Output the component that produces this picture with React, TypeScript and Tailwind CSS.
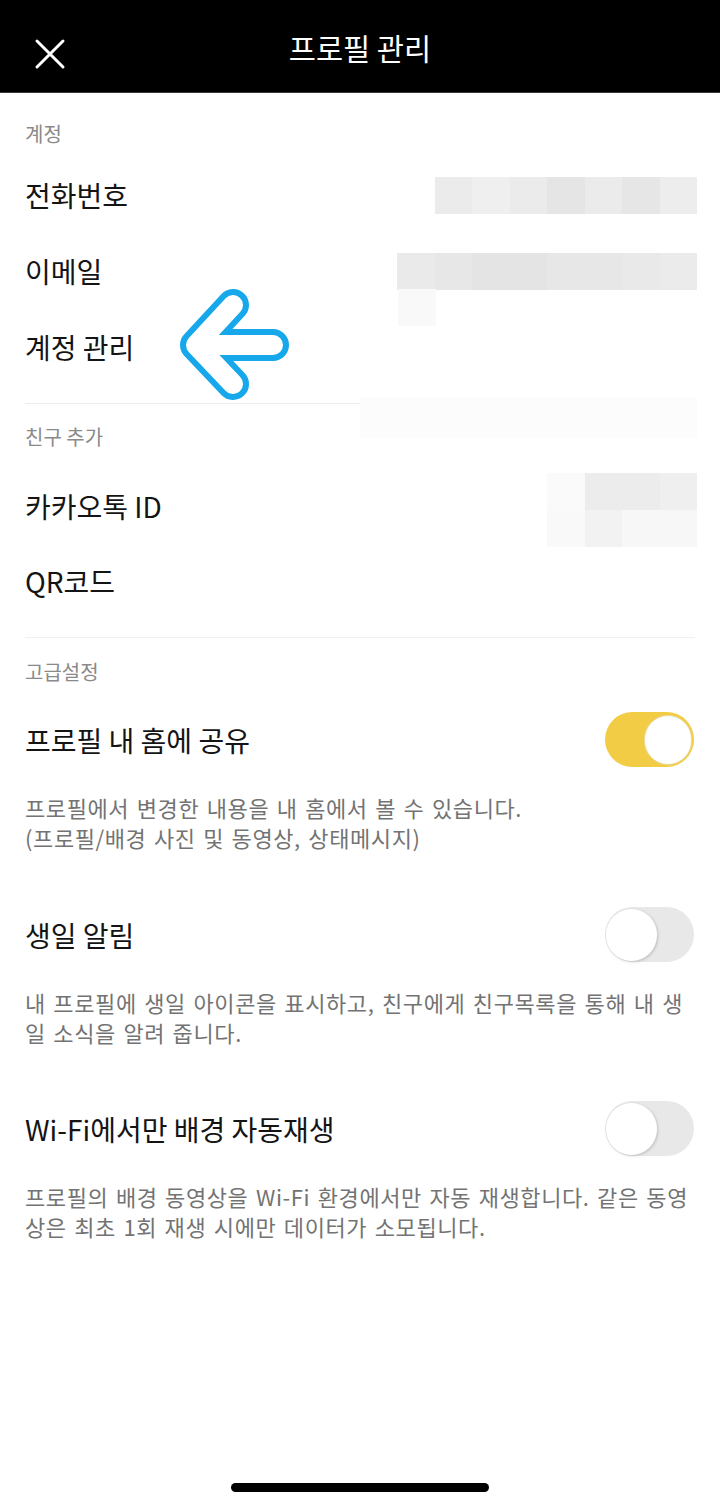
import React from "react";

const FONT = { fontFamily: '"Noto Sans CJK KR", "Noto Sans", sans-serif' };

function Mosaic({ rows, className = "" }: { rows: string[][]; className?: string }) {
  return (
    <div className={`flex flex-col ${className}`}>
      {rows.map((row, i) => (
        <div key={i} className="flex">
          {row.map((c, j) => (
            <div key={j} className="h-[37px] w-[37.5px]" style={{ backgroundColor: c }} />
          ))}
        </div>
      ))}
    </div>
  );
}

function Toggle({ on }: { on: boolean }) {
  return on ? (
    <div className="flex h-[55px] w-[89px] items-center justify-end rounded-full bg-[#f2cc44] pr-[2px]">
      <div className="h-[50px] w-[48px] rounded-full border border-[#e6d9a0] bg-white" />
    </div>
  ) : (
    <div className="flex h-[55px] w-[89px] items-center justify-start rounded-full bg-[#e8e8e8] pl-[1px]">
      <div className="h-[52px] w-[51px] rounded-full bg-white shadow-[1px_1px_3px_rgba(0,0,0,0.18)]" />
    </div>
  );
}

function SectionLabel({ children }: { children: React.ReactNode }) {
  return <div className="px-[25px] text-[20px] leading-[24px] text-[#8a8a8a]">{children}</div>;
}

function Row({ label, right, short }: { label: string; right?: React.ReactNode; short?: boolean }) {
  return (
    <div className={`flex items-center justify-between pl-[25px] pr-[23px] ${short ? "h-[75px]" : "h-[76px]"}`}>
      <span className="text-[28px] leading-[36px] text-[#141414]">{label}</span>
      {right}
    </div>
  );
}

function ToggleRow({ label, on, lines }: { label: string; on: boolean; lines: string[] }) {
  return (
    <div>
      <div className="flex h-[75px] items-center justify-between pl-[25px] pr-[26px]">
        <span className="text-[28px] leading-[36px] text-[#141414]">{label}</span>
        <Toggle on={on} />
      </div>
      <div className="mt-[15px] px-[25px] text-[22px] leading-[30px] tracking-[0.6px] [word-spacing:2px] text-[#737373]">
        {lines.map((l) => (
          <div key={l} className="whitespace-nowrap">{l}</div>
        ))}
      </div>
    </div>
  );
}

export default function App() {
  return (
    <div className="relative flex h-[1504px] w-[720px] flex-col bg-white" style={FONT}>
      {/* header */}
      <div className="relative flex h-[93px] items-center justify-center border-b border-[#3a3a3a] bg-black">
        <svg className="absolute left-[34px] top-[38px]" width="32" height="32" viewBox="0 0 32 32">
          <path d="M3 3 L29 29 M29 3 L3 29" stroke="white" strokeWidth="3" strokeLinecap="round" />
        </svg>
        <span className="pt-[2px] text-[29.5px] text-white">프로필 관리</span>
      </div>

      <div className="pt-[29px]">
        <SectionLabel>계정</SectionLabel>
      </div>
      <div className="mt-[11px]">
        <Row
          label="전화번호"
          right={<Mosaic rows={[["#ebebeb", "#efefef", "#ebebeb", "#e5e5e5", "#ebebeb", "#e6e6e6", "#ededed"]]} />}
        />
        <div className="relative">
          <Row
            label="이메일"
            right={
              <Mosaic
                rows={[["#eaeaea", "#e7e7e7", "#e4e4e4", "#e4e4e4", "#e7e7e7", "#e7e7e7", "#e9e9e9", "#ebebeb"]]}
              />
            }
          />
          <div className="absolute left-[398px] top-[56px] h-[37px] w-[38px] bg-[#f9f9f9]" />
        </div>
        <Row label="계정 관리" />
      </div>

      <div className="relative mt-[18px]">
        <div className="mx-[25px] h-px bg-[#ececec]" />
        <div className="absolute left-[360px] top-[-6px] h-[41px] w-[337px] bg-[#fcfcfc]" />
      </div>

      <div className="relative pt-[21px]">
        <SectionLabel>친구 추가</SectionLabel>
      </div>
      <div className="mt-[19px]">
        <Row
          short
          label="카카오톡 ID"
          right={
            <Mosaic
              className="mt-[9px]"
              rows={[
                ["#fafafa", "#ececec", "#ececec", "#efefef"],
                ["#f9f9f9", "#f2f2f2", "#f7f7f7", "#f7f7f7"],
              ]}
            />
          }
        />
        <Row short label="QR코드" />
      </div>

      <div className="mt-[19px]">
        <div className="mx-[25px] h-px bg-[#f0f0f0]" />
      </div>

      <div className="pt-[22px]">
        <SectionLabel>고급설정</SectionLabel>
      </div>
      <div className="mt-[18px]">
        <ToggleRow
          label="프로필 내 홈에 공유"
          on
          lines={["프로필에서 변경한 내용을 내 홈에서 볼 수 있습니다.", "(프로필/배경 사진 및 동영상, 상태메시지)"]}
        />
      </div>
      <div className="mt-[45px]">
        <ToggleRow
          label="생일 알림"
          on={false}
          lines={["내 프로필에 생일 아이콘을 표시하고, 친구에게 친구목록을 통해 내 생", "일 소식을 알려 줍니다."]}
        />
      </div>
      <div className="mt-[44px]">
        <ToggleRow
          label="Wi-Fi에서만 배경 자동재생"
          on={false}
          lines={[
            "프로필의 배경 동영상을 Wi-Fi 환경에서만 자동 재생합니다. 같은 동영",
            "상은 최초 1회 재생 시에만 데이터가 소모됩니다.",
          ]}
        />
      </div>

      <div className="mt-auto flex justify-center pb-[12px]">
        <div className="h-[9px] w-[258px] rounded-full bg-black" />
      </div>

      {/* blue arrow annotation */}
      <svg className="pointer-events-none absolute left-0 top-0" width="720" height="1504">
        <path
          d="M273 345 L196 345 M233 305 L196 345 L233 384"
          fill="none"
          stroke="#16a8ea"
          strokeWidth="32"
          strokeLinecap="round"
          strokeLinejoin="round"
        />
        <path
          d="M273 345 L196 345 M233 305 L196 345 L233 384"
          fill="none"
          stroke="white"
          strokeWidth="20"
          strokeLinecap="round"
          strokeLinejoin="round"
        />
      </svg>
    </div>
  );
}
